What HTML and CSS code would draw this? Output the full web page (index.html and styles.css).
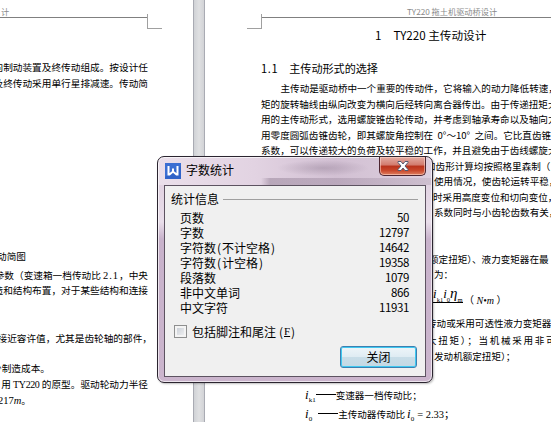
FILE: index.html
```
<!DOCTYPE html>
<html lang="zh-CN">
<head>
    <meta charset="UTF-8">
    <meta name="viewport" content="width=device-width, initial-scale=1.0">
    <title>字数统计</title>
    <link rel="stylesheet" href="styles.css">
</head>

<body>
<div class="pages">
    <div class="page page-left">
        <div class="page-header"><span>计</span></div>
        <div class="corner"></div>
        <div class="line l1">向制动装置及终传动组成。按设计任</div>
        <div class="line">及终传动采用单行星排减速。传动简</div>
        <div class="line l3">动简图</div>
        <div class="line l4">参数（变速箱一档传动比<span class="num wide">2.1</span>，中央</div>
        <div class="line">造和结构布置，对于某些结构和连接</div>
        <div class="line l6">接近容许值，尤其是齿轮轴的部件，</div>
        <div class="line l7">少制造成本。</div>
        <div class="line l8">用<span class="num model">TY220</span>的原型。驱动轮动力半径</div>
        <div class="line l9"><span class="num">217<i>m</i></span>。</div>
    </div>
    <div class="page page-right">
        <div class="page-header"><span>TY220 拖土机驱动桥设计</span></div>
        <div class="corner"></div>
        <h1 class="chapter"><span>1</span>TY220 主传动设计</h1>
        <h2 class="section"><span class="no">1.1</span>主传动形式的选择</h2>
        <div class="line indent">主传动是驱动桥中一个重要的传动件，它将输入的动力降低转速，</div>
        <div class="line">矩的旋转轴线由纵向改变为横向后经转向离合器传出。由于传递扭矩大</div>
        <div class="line">用的主传动形式，选用螺旋锥齿轮传动，并考虑到轴承寿命以及轴向力</div>
        <div class="line">用零度圆弧齿锥齿轮，即其螺旋角控制在<span class="deg">0°～10°</span>之间。它比直齿锥</div>
        <div class="line">系数，可以传递较大的负荷及较平稳的工作，并且避免由于齿线螺旋大</div>
        <div class="line t1">和齿形计算均按照格里森制（</div>
        <div class="line t2">使用情况，使齿轮运转平稳，</div>
        <div class="line t3">时采用高度变位和切向变位，</div>
        <div class="line t2">系数同时与小齿轮齿数有关，</div>
        <div class="line t4">额定扭矩）、液力变矩器在最</div>
        <div class="line t2">为：</div>
        <div class="formula"><span class="frac"><i>i</i><sub>k1</sub><i>i</i><sub>0</sub><i class="eta">η</i><sub>m</sub></span><span class="unit">（&nbsp;<i>N•m</i>&nbsp;）</span></div>
        <div class="line t5">传动或采用可透性液力变矩器</div>
        <div class="line t6">大扭矩）；当机械采用非可</div>
        <div class="line t7">发动机额定扭矩）；</div>
        <div class="line var hid"><i>i</i><sub>Σ</sub></div>
        <div class="line var v1"><i>i</i><sub>k1</sub><b></b>变速器一档传动比；</div>
        <div class="line var v2"><i>i</i><sub>0</sub><b></b>主传动器传动比<i class="gap">i</i><sub>0</sub><span class="eq">= 2.33；</span></div>
    </div>
</div>

<div class="dialog">
    <div class="titlebar">
        <svg class="logo" width="16" height="16" viewBox="0 0 16 16">
            <rect width="16" height="16" fill="#2f63c9"/>
            <path d="M0 0h16v3L0 14z" fill="#4478d8" opacity=".6"/>
            <path d="M3.500 3v8.500h1L8 8.500l3.500 3h1V3M8 5.500v4" fill="none" stroke="#fff" stroke-width="2"/>
        </svg>
        <span class="caption">字数统计</span>
        <button class="close">
            <svg width="12" height="10" viewBox="0 0 12 10">
                <path d="M1 .5h3l2 2.500 2-2.500h3v1L8 5l3 3.500v1H8L6 7 4 9.500H1v-1L4 5 1 1.500z" fill="#fff" stroke="#555a70" stroke-width="1"/>
            </svg>
        </button>
    </div>
    <div class="client">
        <div class="group"><span>统计信息</span></div>
        <div class="row"><span>页数</span><em>50</em></div>
        <div class="row"><span>字数</span><em>12797</em></div>
        <div class="row"><span>字符数<s>(</s>不计空格<s>)</s></span><em>14642</em></div>
        <div class="row"><span>字符数<s>(</s>计空格<s>)</s></span><em>19358</em></div>
        <div class="row"><span>段落数</span><em>1079</em></div>
        <div class="row"><span>非中文单词</span><em>866</em></div>
        <div class="row"><span>中文字符</span><em>11931</em></div>
        <label class="check"><span class="box"></span>包括脚注和尾注<s>(</s><u>F</u><s>)</s></label>
        <button class="ok">关闭</button>
    </div>
</div>
</body>
</html>
```

FILE: styles.css
```
* {
    box-sizing: border-box;
}

body {
    margin: 0;
    width: 551px;
    height: 422px;
    overflow: hidden;
    position: relative;
    background: #fff;
    font-family: "Liberation Serif", "Noto Sans CJK SC", sans-serif;
}

.pages {
    display: flex;
    gap: 12px;
    height: 422px;
    background: linear-gradient(90deg, #a9abb3 0 194px, #d0d2d6 194px, #dfe0e2 199px, #d2d3d6 204px, #a9abb3 204px);
}

.page {
    background: #fff;
    overflow: hidden;
    height: 422px;
}

.page-left {
    width: 193px;
    flex: none;
    padding-right: 45px;
}

.page-right {
    width: 346px;
    flex: none;
    padding-left: 56px;
}

.page-header {
    height: 18px;
    border-bottom: 1px solid #808080;
    color: #8a8a8a;
    font-family: "Noto Sans CJK SC", sans-serif;
    font-size: 8.2px;
    line-height: 22px;
    white-space: nowrap;
}

.page-left .page-header span {
    margin-left: 1px;
}

.page-right .page-header span {
    margin-left: 146px;
}

.corner {
    width: 15px;
    height: 15px;
    margin-top: -4px;
    border-bottom: 1px solid #a0a0a0;
}

.page-left .corner {
    margin-left: 147px;
    border-left: 1px solid #a0a0a0;
}

.page-right .corner {
    margin-left: -14px;
    border-right: 1px solid #a0a0a0;
}

.line {
    display: flex;
    height: 15.5px;
    line-height: 15.5px;
    font-family: "Noto Sans CJK SC", sans-serif;
    font-size: 9.57px;
    color: #000;
    white-space: nowrap;
}

.num {
    font-family: "Liberation Serif", serif;
    font-size: 10.5px;
}

.wide {
    padding-left: 2px;
    letter-spacing: 1px;
}

.page-left .line {
    justify-content: flex-end;
    font-size: 9.67px;
}

.page-left .l1 { margin-top: 31px; }
.page-left .l3 { margin-top: 158px; margin-right: 122px; }
.page-left .l4 { margin-top: 3px; }
.page-left .l6 { margin-top: 32px; margin-right: -4px; }
.page-left .l7 { margin-top: 15px; margin-right: 98px; }
.page-left .l9 { margin-top: 1px; margin-right: 117px; }

.model {
    width: 31px;
    text-align: center;
    font-size: 10px;
    letter-spacing: -.4px;
}

.chapter,
.section {
    margin: 0;
    font-family: "Noto Sans CJK SC", sans-serif;
    font-weight: 400;
    white-space: nowrap;
}

.chapter {
    display: flex;
    gap: 12px;
    margin: -4px 0 0 114px;
    height: 20px;
    font-size: 11.6px;
    line-height: 20px;
}

.section {
    display: flex;
    gap: 11px;
    margin-top: 12px;
    height: 24px;
    font-size: 11.1px;
    line-height: 23px;
}

.section .no {
    letter-spacing: .6px;
}

.indent { padding-left: 19.5px; }
.deg { width: 42px; text-align: center; }
.t1 { margin-left: 165px; }
.t2 { margin-left: 173px; }
.t3 { margin-left: 172px; }
.t4 { margin: 31px 0 0 168px; }
.t5 { margin-left: 166px; }
.t6 { margin: 2px 0 0 166px; letter-spacing: 1.7px; }
.t7 { margin-left: 173px; }

.formula {
    display: flex;
    align-items: flex-start;
    height: 33px;
    padding: 3px 0 0 168px;
    font-size: 13px;
    line-height: 14px;
    white-space: nowrap;
}

.formula sub {
    font-size: 6.5px;
    line-height: 6px;
}

.frac {
    height: 17px;
    width: 34px;
    padding-left: 4px;
    border-bottom: 1px solid #000;
}

.eta {
    font-size: 15px;
}

.unit {
    font-family: "Liberation Serif", "Noto Sans CJK SC", serif;
    font-size: 10px;
    line-height: 30px;
    margin-left: 1px;
}

.var {
    align-items: baseline;
    padding-left: 44px;
}

.var i {
    font-family: "Liberation Serif", serif;
    font-size: 13px;
}

.var sub {
    font-family: "Liberation Serif", serif;
    font-size: 7px;
    vertical-align: baseline;
    position: relative;
    top: 3px;
}

.var b {
    width: 20px;
    height: 1px;
    background: #000;
    align-self: center;
}

.hid { margin-top: 2px; }
.v1 { margin-top: 5px; }
.v2 { margin-top: 4px; }
.v2 b { margin-left: 6px; }
.var .gap { margin-left: 2px; }
.eq { margin-left: 3px; font-family: "Liberation Serif", "Noto Sans CJK SC", serif; font-size: 10.5px; }

/* floating window above the document */
.dialog {
    position: absolute;
    left: 157px;
    top: 156px;
    width: 276px;
    height: 227px;
    padding: 0 6px 6px;
    border: 1px solid #2b2530;
    border-radius: 7px;
    background:
        linear-gradient(90deg, transparent 103px, rgba(95, 75, 100, .3) 112px, rgba(95, 75, 100, .22) 165px, rgba(95, 75, 100, .12) 270px) 0 21px / 100% 7px no-repeat,
        radial-gradient(ellipse 46px 8px at 165px 11px, rgba(95, 75, 100, .25), transparent),
        linear-gradient(90deg, #eadfea 0, #e2d3e2 35%, #d2c0d3 65%, #ddcfde 100%) 0 0 / 100% 28px no-repeat,
        linear-gradient(#dccbdc 0, #e9deea 65px, #c8b2cb 82px, #cbb5cd 100%);
    box-shadow: inset 0 0 0 1px rgba(255, 255, 255, .65), 1px 1px 2px rgba(0, 0, 0, .25);
    font-family: "Noto Sans CJK SC", sans-serif;
    font-size: 12px;
    color: #000;
}

.titlebar {
    display: flex;
    align-items: flex-start;
    height: 28px;
}

.logo {
    margin: 6px 0 0 1px;
}

.caption {
    flex: 1;
    margin: 4px 0 0 5px;
    line-height: 18px;
}

.close {
    display: flex;
    align-items: center;
    justify-content: center;
    width: 47px;
    height: 19px;
    padding: 0;
    border: 1px solid #4d2530;
    border-top: 0;
    border-radius: 0 0 5px 5px;
    background: linear-gradient(#e3aca3 0, #d27a6c 45%, #b8321c 50%, #c9482c 75%, #df8060 100%);
    box-shadow: inset 0 0 0 1px rgba(255, 220, 210, .55);
}

.client {
    display: flex;
    flex-direction: column;
    height: 192px;
    padding: 4px 7px 0 6px;
    border: 1px solid #5d5361;
    background: #f0f0f0;
}

.group {
    display: flex;
    align-items: center;
    gap: 4px;
    height: 18px;
    line-height: 18px;
    margin-bottom: 2px;
}

.group::after {
    content: "";
    flex: 1;
    height: 1px;
    background: #a0a0a0;
}

.row {
    display: flex;
    justify-content: space-between;
    height: 15px;
    line-height: 15px;
    padding: 0 9px;
}

.row em {
    font-style: normal;
    font-size: 11.5px;
    letter-spacing: -.4px;
}

s {
    display: inline-block;
    width: 6px;
    text-align: center;
    text-decoration: none;
}

.check {
    display: flex;
    align-items: center;
    height: 18px;
    margin: 7px 0 0 3px;
}

.check u {
    width: 6px;
    font-family: "Liberation Serif", serif;
    font-size: 11px;
}

.check s:first-of-type {
    margin-left: 2px;
}

.box {
    width: 13px;
    height: 13px;
    margin-right: 5px;
    border: 1px solid #8e8f8f;
    background: linear-gradient(135deg, #c3c9d2, #f6f6f6);
    box-shadow: inset 0 0 0 2px #f4f4f4;
}

.ok {
    align-self: flex-end;
    width: 77px;
    height: 22px;
    margin: 6px 1px 0 0;
    padding: 0;
    border: 1px solid #3c7fb1;
    border-radius: 3px;
    background: linear-gradient(#eef5f9 0, #dfecf3 48%, #c8dde8 50%, #c3d8e4 100%);
    box-shadow: inset 0 0 0 1px #3fc8f0;
    font-family: "Noto Sans CJK SC", sans-serif;
    font-size: 12px;
    line-height: 18px;
    color: #000;
}
```
